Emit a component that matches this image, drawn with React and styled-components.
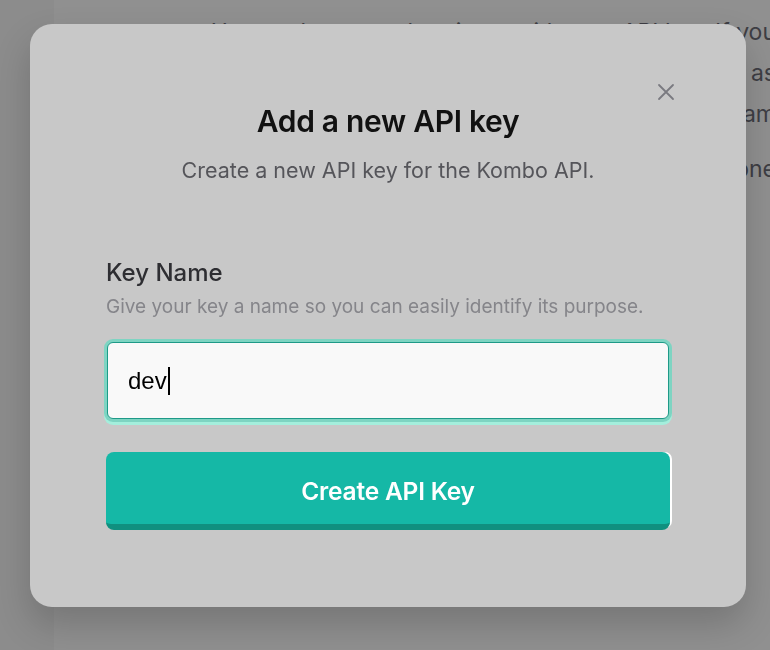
import styled, { createGlobalStyle } from "styled-components";

const GlobalStyle = createGlobalStyle`
  html, body {
    margin: 0;
    padding: 0;
    background: #909090;
    font-family: Inter, "Noto Sans", sans-serif;
  }
  * { box-sizing: border-box; }
`;

const Page = styled.div`
  display: flex;
  width: 770px;
  height: 650px;
  overflow: hidden;
`;

const Sidebar = styled.div`
  width: 54px;
  flex-shrink: 0;
  background: #8c8c8c;
`;

// background page text, mostly hidden by the modal
const Content = styled.div`
  width: 722px;
  flex-shrink: 0;
  padding: 12px 0 0 153px;
  white-space: nowrap;
  text-align: right;
`;

const BgLine = styled.p`
  margin: 0 0 ${(p) => p.$gap || 0}px;
  font-size: 23px;
  line-height: 41px;
  color: #3e3e44;
`;

const Overlay = styled.div`
  position: fixed;
  inset: 0;
  padding: 24px 24px 0 30px;
`;

const Modal = styled.div`
  position: relative;
  width: 716px;
  height: 583px;
  background: #c8c8c8;
  border-radius: 22px;
  box-shadow: 0 18px 36px rgba(0, 0, 0, 0.18);
  padding: 79px 76px 0;
`;

const CloseButton = styled.button`
  position: absolute;
  top: 58px;
  right: 70px;
  width: 20px;
  height: 20px;
  padding: 0;
  border: none;
  background: none;
  color: #7a7a80;
  display: flex;
  align-items: center;
  justify-content: center;
`;

const Header = styled.div`
  display: flex;
  flex-direction: column;
  align-items: center;
  gap: 18px;
`;

const Title = styled.h2`
  margin: 0;
  font-size: 30px;
  line-height: 36px;
  font-weight: 600;
  color: #111;
  letter-spacing: -0.3px;
`;

const Subtitle = styled.p`
  margin: 0;
  font-size: 21.5px;
  line-height: 26px;
  color: #55555a;
`;

const Field = styled.div`
  display: flex;
  flex-direction: column;
  margin-top: 75px;
`;

const Label = styled.label`
  font-size: 24px;
  line-height: 30px;
  font-weight: 500;
  color: #2e2e32;
`;

const Hint = styled.span`
  margin-top: 7px;
  font-size: 19px;
  line-height: 24px;
  color: #85858a;
`;

const Input = styled.div`
  margin: 23px 1px 0;
  height: 77px;
  display: flex;
  align-items: center;
  padding: 0 20px;
  background: #f9f9f9;
  border: 1px solid #1e9a88;
  border-radius: 6px;
  box-shadow: 0 0 0 3px #7ed4c2, 0 3px 0 3px #a4eedc;
  font-family: "Liberation Sans", Arial, sans-serif;
  font-size: 24px;
  color: #000;
`;

const Caret = styled.span`
  display: inline-block;
  width: 2px;
  height: 28px;
  margin-left: 1px;
  background: #000;
`;

const SubmitButton = styled.button`
  margin-top: 33px;
  width: 564px;
  height: 78px;
  border: none;
  border-bottom: 6px solid #10907f;
  border-radius: 8px;
  background: #15b8a6;
  box-shadow: 3px -1px 0 -1px #fff;
  color: #fff;
  font-family: Inter, "Noto Sans", sans-serif;
  font-size: 24.5px;
  font-weight: 600;
  letter-spacing: -0.2px;
  padding: 6px 0 0;
`;

export default function App() {
  return (
    <>
      <GlobalStyle />
      <Page>
        <Sidebar />
        <Content>
          <BgLine>Use a token to authenticate with your API key. If you</BgLine>
          <BgLine>lose the key, you can always create a new one as</BgLine>
          <BgLine $gap={14}>well, for example one for each environment or team</BgLine>
          <BgLine>Only the last characters are shown for each one</BgLine>
        </Content>
      </Page>
      <Overlay>
        <Modal>
          <CloseButton aria-label="Close">
            <svg width="18" height="18" viewBox="0 0 18 18" fill="none" stroke="currentColor" strokeWidth="1.8" strokeLinecap="round">
              <path d="M2 2L16 16M16 2L2 16" />
            </svg>
          </CloseButton>
          <Header>
            <Title>Add a new API key</Title>
            <Subtitle>Create a new API key for the Kombo API.</Subtitle>
          </Header>
          <Field>
            <Label>Key Name</Label>
            <Hint>Give your key a name so you can easily identify its purpose.</Hint>
            <Input>
              dev
              <Caret />
            </Input>
          </Field>
          <SubmitButton>Create API Key</SubmitButton>
        </Modal>
      </Overlay>
    </>
  );
}
